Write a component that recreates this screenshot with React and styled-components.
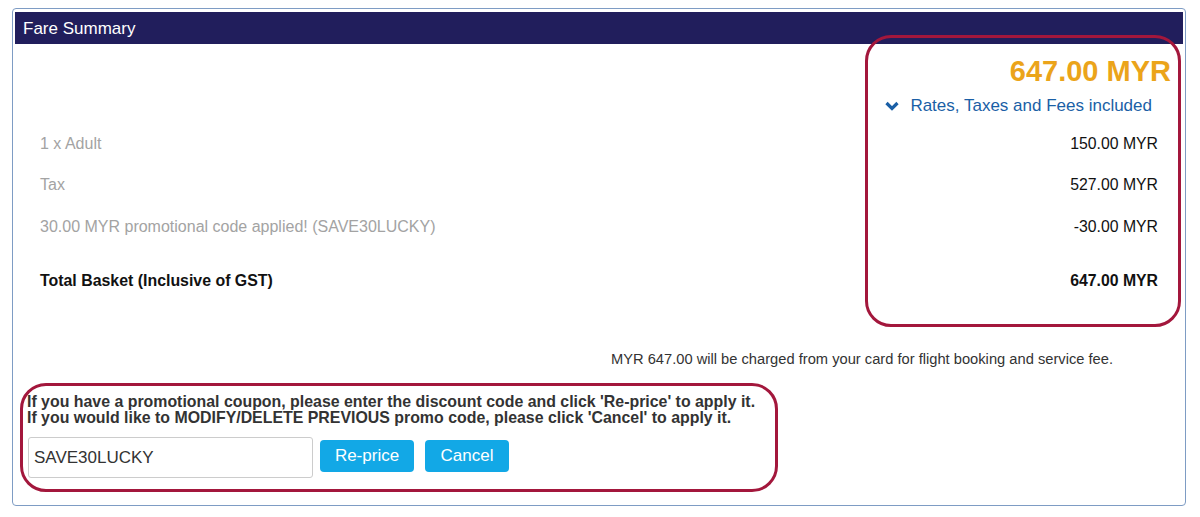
import styled, { createGlobalStyle } from "styled-components";

const GlobalStyle = createGlobalStyle`
	body {
		margin: 0;
		background: #ffffff;
		font-family: "Liberation Sans", Arial, sans-serif;
	}
`;

const rows = [
	{ label: "1 x Adult", value: "150.00 MYR" },
	{ label: "Tax", value: "527.00 MYR" },
	{ label: "30.00 MYR promotional code applied! (SAVE30LUCKY)", value: "-30.00 MYR" },
];

const App = () => {
	return (
		<Page>
			<GlobalStyle />
			<Panel>
				<Header>Fare Summary</Header>
				<Body>
					<PriceTotal>647.00 MYR</PriceTotal>
					<RatesToggle>
						<svg width="14" height="10" viewBox="0 0 14 10">
							<path d="M1.5 2 L7 7.5 L12.5 2" fill="none" stroke="#1a5fa6" strokeWidth="3.2" />
						</svg>
						Rates, Taxes and Fees included
					</RatesToggle>
					<Rows>
						{rows.map((r) => (
							<Row key={r.label}>
								<Label>{r.label}</Label>
								<Value>{r.value}</Value>
							</Row>
						))}
					</Rows>
					<TotalRow>
						<Label $bold>Total Basket (Inclusive of GST)</Label>
						<Value $bold>647.00 MYR</Value>
					</TotalRow>
					<Note>MYR 647.00 will be charged from your card for flight booking and service fee.</Note>
					<PromoText>
						If you have a promotional coupon, please enter the discount code and click 'Re-price' to apply it.
						<br />
						If you would like to MODIFY/DELETE PREVIOUS promo code, please click 'Cancel' to apply it.
					</PromoText>
					<PromoForm>
						<CodeInput defaultValue="SAVE30LUCKY" />
						<Button $width={94}>Re-price</Button>
						<Button $width={84}>Cancel</Button>
					</PromoForm>
				</Body>
			</Panel>
			<Highlight $left={865} $top={35} $width={316} $height={292} />
			<Highlight $left={20} $top={383} $width={758} $height={109} />
		</Page>
	);
};

export default App;

const Page = styled.div`
	position: relative;
	width: 1200px;
	height: 517px;
	padding: 8px 14px 0 12px;
	box-sizing: border-box;
`;

const Panel = styled.div`
	border: 1px solid #7e9cc4;
	border-radius: 4px;
	padding: 3px 2px 0;
	height: 498px;
	box-sizing: border-box;
`;

const Header = styled.div`
	background: #211e5c;
	color: #ffffff;
	font-size: 17px;
	height: 32px;
	line-height: 34px;
	padding-left: 8px;
`;

const Body = styled.div`
	display: flex;
	flex-direction: column;
	padding: 10px 0 0 13px;
`;

const PriceTotal = styled.div`
	align-self: flex-end;
	margin-right: 12px;
	color: #eba41a;
	font-size: 29px;
	font-weight: 700;
	line-height: 34px;
`;

const RatesToggle = styled.div`
	align-self: flex-end;
	margin-right: 31px;
	margin-top: 6px;
	display: flex;
	align-items: center;
	gap: 11px;
	color: #1a5fa6;
	font-size: 17px;
	line-height: 24px;
`;

const Rows = styled.div`
	display: flex;
	flex-direction: column;
	margin-top: 5px;
	padding: 0 25px 0 12px;
`;

const Row = styled.div`
	display: flex;
	justify-content: space-between;
	align-items: center;
	height: 41.5px;
`;

const TotalRow = styled(Row)`
	margin-top: 13px;
	padding: 0 25px 0 12px;
`;

const Label = styled.span`
	font-size: ${(p) => (p.$bold ? "15.9px" : "16px")};
	font-weight: ${(p) => (p.$bold ? 700 : 400)};
	color: ${(p) => (p.$bold ? "#111111" : "#a3a3a3")};
`;

const Value = styled.span`
	font-size: 15.8px;
	font-weight: ${(p) => (p.$bold ? 700 : 400)};
	color: #111111;
`;

const Note = styled.div`
	align-self: flex-end;
	margin-right: 70px;
	margin-top: 47px;
	font-size: 14.7px;
	line-height: 20px;
	color: #333333;
`;

const PromoText = styled.div`
	margin-top: 25px;
	margin-left: -1px;
	font-size: 15.9px;
	font-weight: 700;
	line-height: 16px;
	color: #333333;
`;

const PromoForm = styled.div`
	display: flex;
	align-items: flex-start;
	gap: 11px;
	margin-top: 11px;
`;

const CodeInput = styled.input`
	width: 285px;
	height: 41px;
	box-sizing: border-box;
	border: 1px solid #cccccc;
	border-radius: 3px;
	padding: 0 5px;
	font-family: "Liberation Sans", Arial, sans-serif;
	font-size: 17px;
	color: #333333;
	margin-right: -4px;
`;

const Button = styled.button`
	height: 32px;
	width: ${(p) => p.$width}px;
	margin-top: 3px;
	padding: 0;
	border: none;
	border-radius: 4px;
	background: #12a8e6;
	color: #ffffff;
	font-family: "Liberation Sans", Arial, sans-serif;
	font-size: 17px;
`;

const Highlight = styled.div`
	position: absolute;
	left: ${(p) => p.$left}px;
	top: ${(p) => p.$top}px;
	width: ${(p) => p.$width}px;
	height: ${(p) => p.$height}px;
	box-sizing: border-box;
	border: 3px solid #a3173c;
	border-radius: 26px;
	pointer-events: none;
`;
